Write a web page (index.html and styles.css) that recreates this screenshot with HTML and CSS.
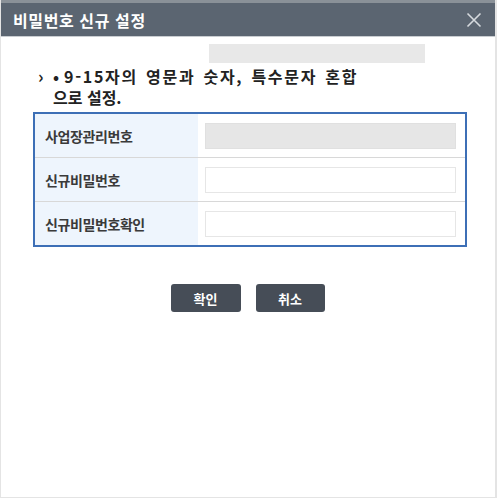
FILE: index.html
```html
<!DOCTYPE html>
<html lang="ko">
<head>
<meta charset="utf-8">
<link rel="stylesheet" href="styles.css">
</head>
<body>
<div class="window">
  <div class="topstrip"></div>
  <div class="titlebar">
    <span class="title">비밀번호 신규 설정</span>
    <svg class="close" width="16" height="16" viewBox="0 0 16 16"><path d="M1.5 1.5 L14.5 14.5 M14.5 1.5 L1.5 14.5" stroke="#d6dade" stroke-width="1.6" fill="none"/></svg>
  </div>
  <div class="content">
    <div class="graybar"></div>
    <div class="notice"><span class="arrow">›</span><span class="bullet">•</span><span class="line1">9-15자의 영문과 숫자, 특수문자 혼합</span><br>으로 설정.</div>
    <div class="form">
      <div class="row">
        <div class="label">사업장관리번호</div>
        <div class="field"><div class="input disabled"></div></div>
      </div>
      <div class="row">
        <div class="label">신규비밀번호</div>
        <div class="field"><div class="input"></div></div>
      </div>
      <div class="row last">
        <div class="label">신규비밀번호확인</div>
        <div class="field"><div class="input"></div></div>
      </div>
    </div>
    <div class="buttons">
      <button class="btn ok">확인</button>
      <button class="btn cancel">취소</button>
    </div>
  </div>
</div>
</body>
</html>
```

FILE: styles.css
```css
html, body {
  margin: 0;
  padding: 0;
  background: #ffffff;
}
body {
  width: 498px;
  height: 499px;
  font-family: "Noto Sans CJK KR", "Noto Sans", sans-serif;
  overflow: hidden;
}
.window {
  width: 497px;
  height: 498px;
  box-sizing: border-box;
  border-left: 1px solid #e4e4e4;
  border-right: 2px solid #e4e4e4;
  border-bottom: 1px solid #e4e4e4;
  background: #fff;
}
.topstrip {
  height: 3px;
  background: #8a9198;
}
.titlebar {
  height: 33px;
  background: #5b6571;
  border-bottom: 1px solid #c9cdd1;
  display: flex;
  align-items: center;
  justify-content: space-between;
  padding: 0 12px 0 12px;
}
.title {
  color: #ffffff;
  font-size: 16px;
  font-weight: 700;
  letter-spacing: 0.6px;
}
.close {
  display: block;
  margin-right: 1px;
}
.content {
  padding-top: 7px;
}
.graybar {
  margin-left: 208px;
  width: 216px;
  height: 19px;
  background: #e8e8e8;
}
.notice {
  margin-top: 3px;
  padding-left: 52px;
  font-size: 16px;
  font-weight: 700;
  line-height: 21px;
  color: #222;
  letter-spacing: 0;
}
.arrow {
  display: inline-block;
  width: 15px;
  margin-left: -15px;
  font-size: 17px;
  line-height: 1;
}
.bullet {
  display: inline-block;
  width: 11px;
}
.line1 {
  letter-spacing: 1.7px;
  word-spacing: 2px;
}
.form {
  margin: 4px 0 0 32px;
  width: 434px;
  box-sizing: border-box;
  border: 2px solid #3d6fb6;
}
.row {
  display: flex;
  height: 43px;
  border-bottom: 1px solid #d8d8d8;
}
.row.last {
  border-bottom: none;
}
.label {
  width: 163px;
  background: #eef5fd;
  display: flex;
  align-items: center;
  padding-left: 10px;
  box-sizing: border-box;
  font-size: 14px;
  font-weight: 700;
  color: #3a3a3a;
  letter-spacing: -0.4px;
}
.field {
  flex: 1;
  display: flex;
  align-items: center;
  padding-left: 7px;
}
.input {
  width: 251px;
  height: 26px;
  box-sizing: border-box;
  border: 1px solid #e6e6e6;
  background: #fff;
}
.input.disabled {
  background: #e6e6e6;
  border-color: #e0e0e0;
}
.buttons {
  margin-top: 37px;
  display: flex;
  justify-content: center;
  gap: 15px;
  padding-right: 1px;
}
.btn {
  height: 28px;
  width: 70px;
  border: none;
  border-radius: 3px;
  background: #464d57;
  color: #fff;
  font-family: "Noto Sans CJK KR", "Noto Sans", sans-serif;
  font-size: 13px;
  font-weight: 700;
  padding: 0;
}
.btn.cancel {
  width: 69px;
}
```
